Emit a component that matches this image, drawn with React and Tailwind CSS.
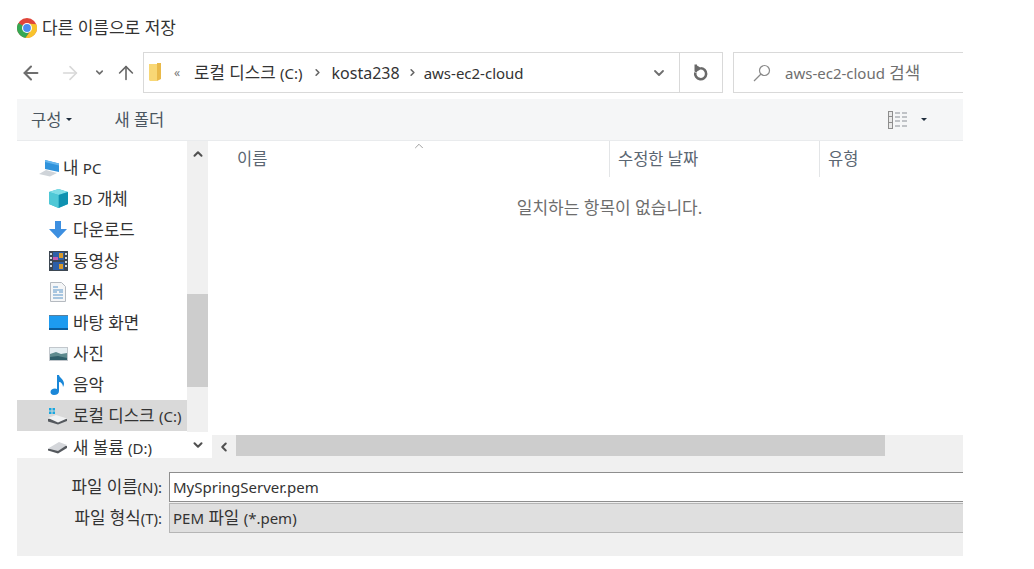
import { ArrowLeft, ArrowRight, ArrowUp, ChevronDown, ChevronRight, ChevronUp, ChevronLeft } from 'lucide-react'

function Chrome() {
  return (
    <svg width="20" height="20" viewBox="0 0 20 20">
      <circle cx="10" cy="10" r="10" fill="#e0453a" />
      <path d="M10 10 L1.300 5 A10 10 0 0 0 8.500 19.900 L13 13 Z" fill="#35a853" />
      <path d="M10 5.500 L19.300 6.300 A10 10 0 0 1 8.500 19.900 L13.800 12.500 Z" fill="#f8c32c" />
      <circle cx="10" cy="10" r="5" fill="#fff" />
      <circle cx="10" cy="10" r="3.900" fill="#4a8df0" />
    </svg>
  )
}

function Folder() {
  return (
    <svg width="13" height="19" viewBox="0 0 13 19">
      <path d="M0 1h8v17H1l-1-1z" fill="#f8d775" />
      <path d="M8 0h4v16l-4 2z" fill="#e9b949" />
    </svg>
  )
}

function RefreshIcon() {
  return (
    <svg width="16" height="17" viewBox="0 0 16 17">
      <path d="M7.500 4.200A5.500 5.500 0 1 1 2.300 8.500" fill="none" stroke="#6a6a6a" strokeWidth="2.600" />
      <path d="M1.500 0.500h2.500v7.500l-0.500 0.500-2-1zM4 1.500l5 3-5 3z" fill="#6a6a6a" />
    </svg>
  )
}

function SearchIcon() {
  return (
    <svg width="18" height="18" viewBox="0 0 18 18" fill="none" stroke="#8a8a8a" strokeWidth="1.200">
      <circle cx="11.500" cy="6.500" r="5" />
      <path d="M8 10L1 17" />
    </svg>
  )
}

function PcIcon() {
  return (
    <svg width="21" height="18" viewBox="0 0 21 18">
      <path d="M6 1l14 3.500v8.500L6 10z" fill="#2f93dc" />
      <path d="M6 1l14 3.500v2L6 3z" fill="#63b5ee" />
      <path d="M0 15l7-4 11 3-7 3.500z" fill="#cfd4d9" />
    </svg>
  )
}

function CubeIcon() {
  return (
    <svg width="19" height="19" viewBox="0 0 19 19">
      <path d="M9.500 0L19 3v12l-9.500 4L0 15V3z" fill="#38bcd0" />
      <path d="M0 3l9.500 3L19 3 9.500 0z" fill="#7fdde6" />
      <path d="M9.500 6v13L19 15V3z" fill="#0f91b0" />
      <path d="M0 3l9.500 3v13L0 15z" fill="#4fc8d6" />
    </svg>
  )
}

function DownloadIcon() {
  return (
    <svg width="18" height="18" viewBox="0 0 18 18">
      <path d="M6 0h6v8h6l-9 9.500L0 8h6z" fill="#3d8fe0" />
    </svg>
  )
}

function VideoIcon() {
  return (
    <svg width="19" height="20" viewBox="0 0 19 20">
      <rect width="19" height="20" fill="#3d4752" />
      <rect x="4" y="1" width="11" height="8" fill="#2c5fa8" />
      <rect x="4" y="11" width="11" height="8" fill="#2c5fa8" />
      <path d="M4 6h5v3H4z" fill="#c05ab5" />
      <path d="M10 2h4v5h-4zM10 13h4v5h-4z" fill="#d99a2b" />
      <path d="M1 2h2v2H1zM1 6h2v2H1zM1 10h2v2H1zM1 14h2v2H1zM16 2h2v2h-2zM16 6h2v2h-2zM16 10h2v2h-2zM16 14h2v2h-2z" fill="#d5dce2" />
    </svg>
  )
}

function DocIcon() {
  return (
    <svg width="16" height="20" viewBox="0 0 16 20">
      <path d="M.5.500h11l4 4v15H.5z" fill="#f5f6f7" stroke="#b5bac0" />
      <path d="M3 5h5M3 8h10M3 10h4M9 10h4M3 13h10M3 16h10" stroke="#5a95c8" strokeWidth="1" />
    </svg>
  )
}

function DesktopIcon() {
  return (
    <svg width="19" height="15" viewBox="0 0 19 15">
      <rect width="19" height="15" fill="#1d9bf0" />
      <rect x="0" y="13" width="19" height="2" fill="#0c5e9e" />
      <rect x="0" y="0" width="19" height="1" fill="#5a7f9c" />
    </svg>
  )
}

function PhotoIcon() {
  return (
    <svg width="19" height="14" viewBox="0 0 19 14">
      <rect width="19" height="14" fill="#c2c7cc" />
      <rect x="1" y="1" width="17" height="12" fill="#e6eff3" />
      <path d="M1 7l6-2 5 2 6-1v7H1z" fill="#5d8a8e" />
      <path d="M1 10l8-1 9 2v2H1z" fill="#2f5f6a" />
    </svg>
  )
}

function MusicIcon() {
  return (
    <svg width="16" height="20" viewBox="0 0 16 20">
      <path d="M7 0h2c.5 3 5 4 5 9 0 1-.5 2-1 3 0-3-2-5-4-5v9c0 2.500-2 4-5 4-2.500 0-3.500-1.500-3.500-3 0-2 2-3.500 4.500-3.500.8 0 1.500.2 2 .5z" fill="#1a87d8" />
    </svg>
  )
}

function DiskCIcon() {
  return (
    <svg width="20" height="18" viewBox="0 0 20 18">
      <path d="M1 1h2.500v2.500H1zM4.500 1H7v2.500H4.500zM1 4.500h2.500V7H1zM4.500 4.500H7V7H4.500z" fill="#19a7e0" />
      <path d="M0 12l8-2 11 2v2l-9 3.500-10-3z" fill="#55595e" />
      <path d="M0 11l8-3 11 3.500-9 4z" fill="#f1f2f3" />
    </svg>
  )
}

function DiskIcon() {
  return (
    <svg width="20" height="13" viewBox="0 0 20 13">
      <path d="M0 8l12-5 7 2v2l-9 5.500-10-3z" fill="#55595e" />
      <path d="M0 7.500L11 1l8 3-9 6z" fill="#d4d6da" />
    </svg>
  )
}

function ViewIcon() {
  return (
    <svg width="19" height="18" viewBox="0 0 19 18">
      <rect x=".5" y=".5" width="4" height="17" fill="#e8e8e8" stroke="#8d8d8d" />
      <path d="M1 5.500h3M1 11.500h3" stroke="#8d8d8d" />
      <path d="M7 2h5M14 2h5M7 6h5M14 6h5M7 10h5M14 10h5M7 15h5M14 15h5" stroke="#8a8f96" />
    </svg>
  )
}

function Caret() {
  return <span className="block w-0 h-0 border-x-[3px] border-x-transparent border-t-[3px] border-t-[#1f2d3d]" />
}

// latin runs sit a bit smaller next to the hangul, like Segoe next to Malgun
function L({ children }) {
  return <span className="text-[15px]">{children}</span>
}

const places = [
  { name: <><L>3D</L> 개체</>, icon: <CubeIcon /> },
  { name: '다운로드', icon: <DownloadIcon /> },
  { name: '동영상', icon: <VideoIcon /> },
  { name: '문서', icon: <DocIcon /> },
  { name: '바탕 화면', icon: <DesktopIcon /> },
  { name: '사진', icon: <PhotoIcon /> },
  { name: '음악', icon: <MusicIcon /> },
]

function Sidebar() {
  return (
    <div className="w-[170px] shrink-0 h-full overflow-hidden pt-[11px] text-[16.8px] text-[#333]">
      <div className="h-[31px] flex items-center pl-[22px] gap-[3px]">
        <span className="w-[21px] flex justify-center"><PcIcon /></span>
        <span>내 <L>PC</L></span>
      </div>
      {places.map((p, i) => (
        <div key={i} className="h-[31px] flex items-center pl-[31px] gap-[5px]">
          <span className="w-[20px] flex justify-center">{p.icon}</span>
          <span>{p.name}</span>
        </div>
      ))}
      <div className="h-[31px] flex items-center pl-[31px] gap-[5px] bg-[#d9d9d9] whitespace-nowrap">
        <span className="w-[20px] flex justify-center"><DiskCIcon /></span>
        <span>로컬 디스크 <L>(C:)</L></span>
      </div>
      <div className="h-[31px] mt-[1px] flex items-center pl-[31px] gap-[5px] whitespace-nowrap">
        <span className="w-[20px] flex justify-center"><DiskIcon /></span>
        <span>새 볼륨 <L>(D:)</L></span>
      </div>
    </div>
  )
}

function SideScroll() {
  return (
    <div className="w-[21px] shrink-0 h-full bg-[#f0f0f0] flex flex-col items-center">
      <div className="h-[26px] flex items-center">
        <ChevronUp size={14} strokeWidth={3.5} className="text-[#505050]" />
      </div>
      <div className="h-[127px]" />
      <div className="h-[93px] w-full bg-[#cdcdcd]" />
      <div className="flex-1" />
      <div className="h-[26px] w-full bg-white flex items-center justify-center">
        <ChevronDown size={14} strokeWidth={3.5} className="text-[#505050]" />
      </div>
    </div>
  )
}

function FileList() {
  return (
    <div className="flex-1 h-full ml-[4px] flex flex-col relative">
      <div className="h-[36px] flex items-center text-[16.5px] text-[#5b6672]">
        <div className="w-[398px] h-full flex items-center pl-[25px] pt-[1px] border-r border-[#e3e5e7]">이름</div>
        <div className="w-[210px] h-full flex items-center pl-[8px] pt-[1px] border-r border-[#e3e5e7]">수정한 날짜</div>
        <div className="pl-[8px] pt-[1px]">유형</div>
      </div>
      <ChevronUp size={14} strokeWidth={1.25} className="absolute left-[200px] top-[-2px] text-[#7d7d7d]" />
      <div className="flex-1 flex justify-center pt-[18px] pl-[44px] text-[17px] text-[#6d6d6d]">일치하는 항목이 없습니다.</div>
      <div className="h-[23px] mt-auto bg-[#f0f0f0] flex">
        <div className="w-[24px] bg-[#f0f0f0] flex items-center justify-center">
          <ChevronLeft size={14} strokeWidth={3.5} className="text-[#505050]" />
        </div>
        <div className="w-[649px] h-[21px] bg-[#cdcdcd]" />
      </div>
    </div>
  )
}

export default function App() {
  return (
    <div className="w-[1034px] h-[569px] bg-white overflow-hidden pl-[17px] font-['Noto_Sans','Noto_Sans_CJK_KR',sans-serif]">
      <div className="w-[946px] h-[556px] flex flex-col">
        <div className="h-[52px] shrink-0 flex items-center gap-[5px] pt-[4px] text-[17px] text-[#333]">
          <Chrome />
          <span>다른 이름으로 저장</span>
        </div>

        <div className="h-[47px] shrink-0 flex items-start">
          <div className="w-[126px] h-[41px] shrink-0 flex items-center text-[#6e6e6e]">
            <ArrowLeft size={22} strokeWidth={2.25} className="ml-[3px] shrink-0" />
            <ArrowRight size={22} strokeWidth={1.75} className="ml-[17px] shrink-0 text-[#d8d8d8]" />
            <ChevronDown size={11} strokeWidth={3.5} className="ml-[13px] shrink-0" />
            <ArrowUp size={22} strokeWidth={1.75} className="ml-[10px] shrink-0 text-[#666]" />
          </div>
          <div className="w-[580px] h-[41px] shrink-0 flex items-center border border-[#d9d9d9] text-[16.8px] text-[#333]">
            <span className="ml-[5px]"><Folder /></span>
            <span className="ml-[12px] mr-[14px] text-[12px] text-[#777]">«</span>
            <span className="pt-[1px]">로컬 디스크 <L>(C:)</L></span>
            <ChevronRight size={11} strokeWidth={3.5} className="ml-[9px] mr-[9px] text-[#666]" />
            <span className="pt-[1px] text-[16px]">kosta238</span>
            <ChevronRight size={11} strokeWidth={3.5} className="ml-[7px] mr-[6px] text-[#666]" />
            <span className="pt-[1px] text-[15px]">aws-ec2-cloud</span>
            <ChevronDown size={16} strokeWidth={2.75} className="ml-auto mr-[12px] text-[#6e6e6e]" />
            <div className="w-[43px] h-full border-l border-[#d9d9d9] flex items-center justify-center">
              <RefreshIcon />
            </div>
          </div>
          <div className="ml-[10px] flex-1 h-[41px] flex items-center border-y border-l border-[#d9d9d9] text-[16.8px] text-[#6f6f6f]">
            <span className="ml-[19px]"><SearchIcon /></span>
            <span className="ml-[14px] pt-[1px]"><L>aws-ec2-cloud</L> 검색</span>
          </div>
        </div>

        <div className="h-[42px] shrink-0 bg-[#f5f6f7] border-b border-[#e9ebed] flex items-center text-[16.5px] text-[#4b5661]">
          <span className="ml-[14px] pt-[1px]">구성</span>
          <span className="ml-[5px]"><Caret /></span>
          <span className="ml-[42px] pt-[1px]">새 폴더</span>
          <span className="ml-auto"><ViewIcon /></span>
          <span className="ml-[14px] mr-[36px]"><Caret /></span>
        </div>

        <div className="h-[317px] shrink-0 flex">
          <Sidebar />
          <SideScroll />
          <FileList />
        </div>

        <div className="flex-1 bg-[#f0f0f0] pt-[14px] text-[16.8px] text-[#333]">
          <div className="h-[30px] flex items-center">
            <span className="w-[145px] text-right whitespace-nowrap">파일 이름<L>(N):</L></span>
            <div className="ml-[7px] flex-1 h-full flex items-center pl-[3px] bg-white border border-[#8e8e8e] border-r-0"><L>MySpringServer.pem</L></div>
          </div>
          <div className="h-[30px] mt-[1px] flex items-center">
            <span className="w-[145px] text-right whitespace-nowrap">파일 형식<L>(T):</L></span>
            <div className="ml-[7px] flex-1 h-full flex items-center pl-[3px] bg-[#dfdfdf] border border-[#b5b5b5] border-r-0">
              <span><L>PEM</L> 파일 <L>(*.pem)</L></span>
            </div>
          </div>
        </div>
      </div>
    </div>
  )
}
